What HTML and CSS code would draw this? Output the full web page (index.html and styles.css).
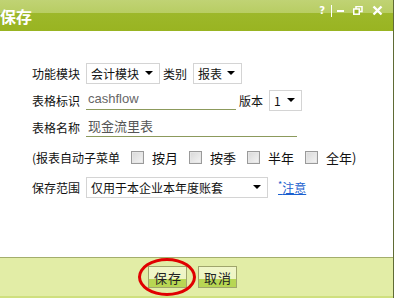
FILE: index.html
```html
<!DOCTYPE html>
<html lang="zh-CN">
<head>
  <meta charset="UTF-8">
  <title>保存</title>
  <link rel="stylesheet" href="styles.css">
</head>
<body>
  <div class="dialog">
    <!-- Title bar -->
    <div class="titlebar">
      <span class="title">保存</span>
      <div class="controls">
        <span class="ctl help">?</span>
        <span class="sep"></span>
        <span class="ctl min"></span>
        <svg class="ctl restore" width="10" height="9" viewBox="0 0 10 9">
          <rect x="3" y="0.5" width="6" height="5" fill="none" stroke="#fff" stroke-width="1.5"/>
          <rect x="0.75" y="3" width="5.5" height="5.2" fill="#9cb728" stroke="#fff" stroke-width="1.5"/>
        </svg>
        <svg class="ctl close" width="11" height="11" viewBox="0 0 11 11">
          <path d="M1.5 1.5 L9.5 9.5 M9.5 1.5 L1.5 9.5" stroke="#fff" stroke-width="2.4"/>
        </svg>
      </div>
    </div>

    <!-- Form -->
    <div class="body">
      <div class="row">
        <span class="label">功能模块</span>
        <div class="select sel-module"><span>会计模块</span><i class="arrow"></i></div>
        <span class="label small-gap">类别</span>
        <div class="select sel-type"><span>报表</span><i class="arrow"></i></div>
      </div>
      <div class="row">
        <span class="label">表格标识</span>
        <div class="input in-id">cashflow</div>
        <span class="label small-gap">版本</span>
        <div class="select sel-ver"><span>1</span><i class="arrow"></i></div>
      </div>
      <div class="row">
        <span class="label">表格名称</span>
        <div class="input in-name">现金流里表</div>
      </div>
      <div class="row spaced">
        <span class="label">(报表自动子菜单</span>
        <span class="check"></span><span class="opt">按月</span>
        <span class="check"></span><span class="opt">按季</span>
        <span class="check"></span><span class="opt">半年</span>
        <span class="check"></span><span class="opt">全年)</span>
      </div>
      <div class="row spaced">
        <span class="label">保存范围</span>
        <div class="select sel-scope"><span>仅用于本企业本年度账套</span><i class="arrow"></i></div>
        <a class="note" href="#"><sup>*</sup>注意</a>
      </div>
    </div>

    <!-- Footer -->
    <div class="footer">
      <div class="btn-wrap">
        <button class="btn">保存</button>
        <span class="circle"></span>
      </div>
      <button class="btn">取消</button>
    </div>
  </div>
</body>
</html>
```

FILE: styles.css
```css
* {
  margin: 0;
  padding: 0;
  box-sizing: border-box;
}

body {
  width: 396px;
  height: 298px;
  background: #fff;
  font-family: "Noto Sans CJK SC", "DejaVu Sans", sans-serif;
  font-size: 12px;
  color: #111;
  overflow: hidden;
}

.dialog {
  width: 394px;
  height: 298px;
  border-right: 1px solid #5f6b35;
  display: flex;
  flex-direction: column;
}

/* Title bar */
.titlebar {
  height: 31px;
  background: linear-gradient(#c0d374 0, #b8cd63 13px, #9db82a 13px, #99b421 31px);
  display: flex;
  align-items: center;
  justify-content: space-between;
  padding: 0 10px 0 0;
}

.title {
  color: #fff;
  font-size: 16px;
  font-weight: bold;
  line-height: 16px;
  margin-top: 1px;
}

.controls {
  display: flex;
  align-items: center;
  margin-top: -10px;
}

.ctl {
  color: #fff;
  display: block;
}

.help {
  font-family: "DejaVu Sans", sans-serif;
  font-size: 10px;
  font-weight: bold;
  line-height: 10px;
  margin-right: 6px;
}

.sep {
  width: 1px;
  height: 12px;
  background: #fff;
  margin-right: 5px;
}

.min {
  width: 7px;
  height: 2px;
  background: #fff;
  margin-right: 9px;
}

.restore {
  margin-right: 9px;
}

/* Form body */
.body {
  flex: 1;
  background: #fff;
  padding: 31px 0 0 32px;
  display: flex;
  flex-direction: column;
  gap: 5px;
}

.row {
  height: 22px;
  display: flex;
  align-items: center;
}

.row.spaced {
  margin-top: 3px;
}

.label {
  white-space: nowrap;
  margin-right: 6px;
}

.small-gap {
  margin-left: 3px;
}

.select {
  height: 21px;
  border: 1px solid #d4d4d4;
  background: #fff;
  display: flex;
  align-items: center;
  justify-content: space-between;
  padding: 0 6px 0 4px;
  font-size: 12px;
}

.arrow {
  width: 0;
  height: 0;
  border-left: 4px solid transparent;
  border-right: 4px solid transparent;
  border-top: 4px solid #000;
}

.sel-module { width: 74px; }
.sel-type { width: 49px; }
.sel-ver { width: 33px; }
.sel-scope { width: 182px; }

.input {
  height: 20px;
  border-bottom: 1px solid #8c9a5c;
  padding-left: 2px;
  line-height: 18px;
  font-size: 13px;
  color: #666;
}

.in-id {
  width: 150px;
  font-family: "Liberation Sans", sans-serif;
}

.in-name {
  width: 211px;
  color: #555;
}

.check {
  width: 13px;
  height: 13px;
  border: 1px solid #9a9a9a;
  background: linear-gradient(135deg, #d8d8d8, #f4f4f4);
  box-shadow: inset 0 0 0 1px #e6e6e6;
  margin: 0 8px 0 5px;
}

.opt {
  margin-right: 6px;
  font-size: 13px;
}

.note {
  color: #1a5fcf;
  margin-left: 10px;
  font-size: 12px;
}

.note sup {
  font-size: 9px;
}

/* Footer */
.footer {
  height: 41px;
  background: #e2eda6;
  border-top: 1px solid #a3ae6c;
  border-bottom: 2px solid #cfe07e;
  display: flex;
  align-items: center;
  justify-content: center;
  gap: 11px;
  padding: 0 8px 0 0;
}

.btn-wrap {
  position: relative;
}

.btn {
  display: block;
  width: 39px;
  height: 22px;
  border: 1px solid #9fa56b;
  background: linear-gradient(#f0f6c8 0, #eef5c4 62%, #b8d653 62%, #b8d653 100%);
  font-family: "Noto Sans CJK SC", sans-serif;
  font-size: 13px;
  line-height: 19px;
  color: #222;
  letter-spacing: 1px;
  text-indent: 1px;
}

.circle {
  position: absolute;
  left: -10px;
  top: -8px;
  width: 58px;
  height: 38px;
  border: 3px solid #e00000;
  border-radius: 50%;
}
```
